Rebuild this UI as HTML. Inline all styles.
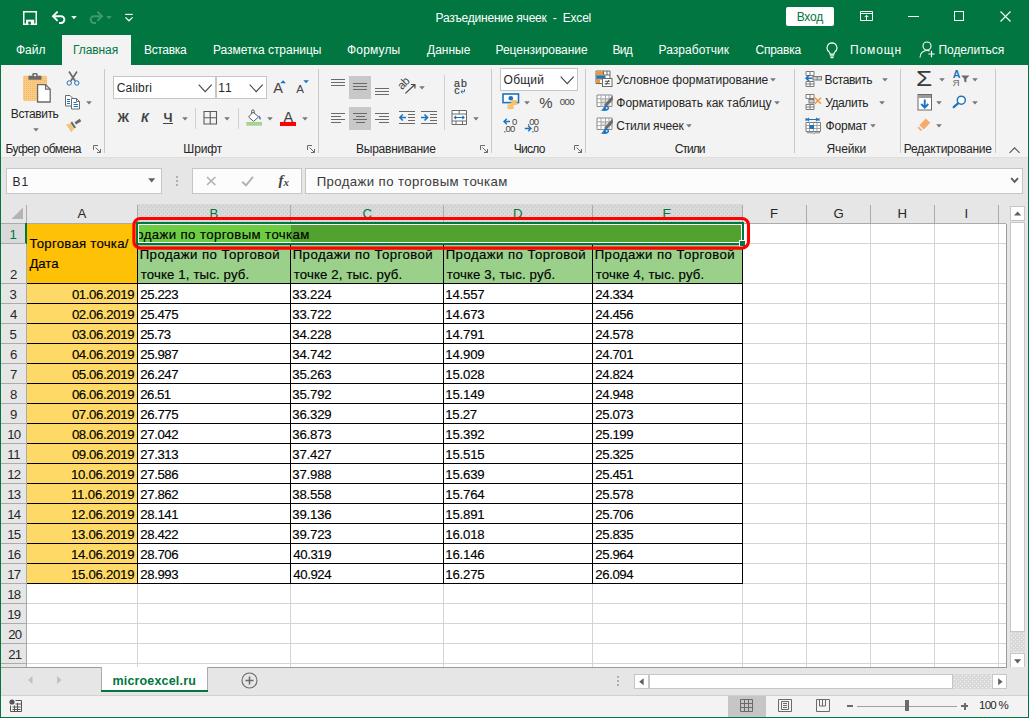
<!DOCTYPE html>
<html lang="ru"><head><meta charset="utf-8"><title>Excel</title>
<style>
html,body{margin:0;padding:0;}
body{width:1029px;height:718px;overflow:hidden;background:#e6e6e6;font-family:"Liberation Sans", sans-serif;}
#w{position:relative;width:1029px;height:718px;overflow:hidden;}
#w div,#w span,#w svg{position:absolute;}
#w span{white-space:pre;}
</style></head><body><div id="w">
<div style="left:0px;top:0px;width:1029px;height:65px;background:#017641;"></div>
<svg style="left:23px;top:10.5px;" width="14" height="15" viewBox="0 0 14 15"><rect x="0.75" y="0.75" width="12.5" height="12.5" fill="none" stroke="#fff" stroke-width="1.5"/><rect x="3" y="8.7" width="8.2" height="4.6" fill="#fff"/><rect x="5.3" y="10.6" width="2.5" height="3" fill="#017641"/></svg>
<svg style="left:51px;top:10px;" width="17" height="15" viewBox="0 0 17 15"><path d="M1.8 6.2 H10 a3.4 3.4 0 0 1 0 6.8 H8" fill="none" stroke="#fff" stroke-width="1.9"/><path d="M6.6 1.6 L2 6.2 L6.6 10.8" fill="none" stroke="#fff" stroke-width="1.9"/></svg>
<svg style="left:70.5px;top:15.8px;" width="7" height="4" viewBox="0 0 7 4"><path d="M0.2 0h5.6l-2.8 3.2z" fill="#fff"/></svg>
<svg style="left:87px;top:10px;" width="17" height="15" viewBox="0 0 17 15"><path d="M15.2 6.2 H7 a3.4 3.4 0 0 0 0 6.8 H9" fill="none" stroke="#3d9a72" stroke-width="1.9"/><path d="M10.4 1.6 L15 6.2 L10.4 10.8" fill="none" stroke="#3d9a72" stroke-width="1.9"/></svg>
<svg style="left:105.5px;top:15.8px;" width="7" height="4" viewBox="0 0 7 4"><path d="M0.2 0h5.6l-2.8 3.2z" fill="#3d9a72"/></svg>
<svg style="left:124px;top:13px;" width="11" height="9" viewBox="0 0 11 9"><path d="M1.2 1.4h7.6" stroke="#fff" stroke-width="1.1"/><path d="M1.4 4.4l3.6 3.4 3.6-3.4" fill="none" stroke="#fff" stroke-width="1.2"/></svg>
<span style="font-size:12px;line-height:20px;top:8px;color:#fff;letter-spacing:-0.222px;left:435.60px;">Разъединение ячеек  -  Excel</span>
<div style="left:786px;top:7px;width:48px;height:19px;background:#fff;border-radius:2px;"></div>
<span style="font-size:12px;line-height:20px;top:7px;color:#017641;letter-spacing:-0.233px;left:796.70px;">Вход</span>
<svg style="left:860px;top:11px;" width="13" height="10" viewBox="0 0 13 10"><path d="M0.5 0.5h12v9h-12z M0.5 2.5h12" fill="none" stroke="#fff" stroke-width="1"/><path d="M6.5 9v-4.5 M4.5 6.2l2-2 2 2" fill="none" stroke="#fff" stroke-width="1"/></svg>
<div style="left:908px;top:16px;width:11px;height:1px;background:#fff;"></div>
<div style="left:954px;top:11px;width:10px;height:10px;border:1px solid #fff;box-sizing:border-box;"></div>
<svg style="left:1000px;top:11px;" width="11" height="11" viewBox="0 0 11 11"><path d="M0.5 0.5l10 10 M10.5 0.5l-10 10" stroke="#fff" stroke-width="1.1"/></svg>
<div style="left:62px;top:35px;width:69px;height:31px;background:#f3f3f3;"></div>
<span style="font-size:12px;line-height:20px;top:40px;color:#fff;left:16.00px;">Файл</span>
<span style="font-size:12px;line-height:20px;top:40px;color:#017641;letter-spacing:-0.083px;left:73.00px;">Главная</span>
<span style="font-size:12px;line-height:20px;top:40px;color:#fff;letter-spacing:-0.333px;left:144.00px;">Вставка</span>
<span style="font-size:12px;line-height:20px;top:40px;color:#fff;letter-spacing:-0.031px;left:213.00px;">Разметка страницы</span>
<span style="font-size:12px;line-height:20px;top:40px;color:#fff;letter-spacing:0.167px;left:347.00px;">Формулы</span>
<span style="font-size:12px;line-height:20px;top:40px;color:#fff;left:427.00px;">Данные</span>
<span style="font-size:12px;line-height:20px;top:40px;color:#fff;letter-spacing:-0.038px;left:495.50px;">Рецензирование</span>
<span style="font-size:12px;line-height:20px;top:40px;color:#fff;letter-spacing:-0.700px;left:612.40px;">Вид</span>
<span style="font-size:12px;line-height:20px;top:40px;color:#fff;letter-spacing:0.050px;left:658.50px;">Разработчик</span>
<span style="font-size:12px;line-height:20px;top:40px;color:#fff;letter-spacing:-0.250px;left:755.50px;">Справка</span>
<span style="font-size:12px;line-height:20px;top:40px;color:#fff;letter-spacing:0.900px;left:850.00px;">Помощн</span>
<span style="font-size:12px;line-height:20px;top:40px;color:#fff;letter-spacing:-0.056px;left:938.50px;">Поделиться</span>
<svg style="left:825.6px;top:41.6px;" width="13" height="17" viewBox="0 0 13 17"><path d="M6 0.9a5 5 0 0 0-2.9 9c.6.6.9 1.3.9 2.2h4c0-.9.3-1.6.9-2.2A5 5 0 0 0 6 0.9z M4 13.8h4 M4.6 15.6h2.8" fill="none" stroke="#fff" stroke-width="1.15"/></svg>
<svg style="left:919px;top:41px;" width="17" height="17" viewBox="0 0 17 17"><circle cx="8" cy="5" r="4" fill="none" stroke="#fff" stroke-width="1.1"/><path d="M1 16.5c0-4.2 3-7 7-7c1 0 1.9.2 2.6.5" fill="none" stroke="#fff" stroke-width="1.1"/><path d="M12.5 9.8v6.4 M9.3 13h6.4" stroke="#fff" stroke-width="1.2"/></svg>
<div style="left:1px;top:65px;width:1027px;height:92px;background:#f3f3f3;"></div>
<div style="left:1px;top:157px;width:1027px;height:1px;background:#dedede;"></div>
<svg style="left:22px;top:72px;" width="30" height="32" viewBox="0 0 30 32"><rect x="1" y="3.7" width="24" height="25" rx="1.5" fill="#f9cb84"/><rect x="1" y="3.7" width="24" height="25" rx="1.5" fill="url(#dpo)"/><path d="M6.4 7.8v-3.2a0.8 0.8 0 0 1 .8-.8h3.1v-1.6a1.3 1.3 0 0 1 1.3-1.3h2.7a1.3 1.3 0 0 1 1.3 1.3v1.6h3.1a0.8 0.8 0 0 1 .8.8v3.2z" fill="#6a6a6a"/><rect x="11.9" y="2.4" width="2.2" height="1.8" fill="#f3f3f3"/><path d="M15.6 12.6h8l4.6 4.6v12.8h-12.6z" fill="#fff" stroke="#6a6a6a" stroke-width="1.3"/><path d="M23.6 12.6v4.6h4.6" fill="none" stroke="#6a6a6a" stroke-width="1.3"/><defs><pattern id="dpo" width="2" height="2" patternUnits="userSpaceOnUse"><rect x="0" y="0" width="1" height="1" fill="#f4b566"/></pattern></defs></svg>
<span style="font-size:12px;line-height:20px;top:104px;color:#262626;letter-spacing:-0.400px;left:10.80px;">Вставить</span>
<svg style="left:33px;top:128px;" width="7" height="4" viewBox="0 0 7 4"><path d="M0.2 0.2h5.6l-2.8 3.3z" fill="#777"/></svg>
<svg style="left:65px;top:71px;" width="16" height="16" viewBox="0 0 16 16"><path d="M4 0.5l6.2 9.5 M12 0.5l-6.2 9.5" stroke="#6a6a6a" stroke-width="1.7" fill="none"/><circle cx="4.2" cy="12" r="2.2" fill="none" stroke="#1e73be" stroke-width="1"/><circle cx="11.8" cy="12" r="2.2" fill="none" stroke="#1e73be" stroke-width="1"/></svg>
<svg style="left:64px;top:95px;" width="17" height="15" viewBox="0 0 17 15"><path d="M1.5 0.5h4.5l2.5 2.5v8h-7z" fill="#fff" stroke="#6a6a6a"/><path d="M3 4.5h3 M3 6.5h3 M3 8.5h3" stroke="#1e73be"/><path d="M7.5 3.5h5l3 3v7.5h-8z" fill="#fff" stroke="#6a6a6a"/><path d="M12.5 3.5v3h3" fill="none" stroke="#6a6a6a"/><path d="M9.5 7.5h3 M9.5 9.5h4.5 M9.5 11.5h4.5" stroke="#1e73be"/></svg>
<svg style="left:86px;top:101px;" width="7" height="4" viewBox="0 0 7 4"><path d="M0.2 0.2h5.6l-2.8 3.3z" fill="#777"/></svg>
<svg style="left:65px;top:117px;" width="18" height="16" viewBox="0 0 18 16"><path d="M9.5 5.2l5.2-3.4 1.6 2.4-5.2 3.4z" fill="#6a6a6a"/><path d="M7.2 4.6l3.8 5.8-1.8 1.2-3.8-5.8z" fill="#6a6a6a"/><path d="M1 7.6l4.2-1.2 3.6 5.4-2.4 3.4c-1-.6-1.4-1.8-2.2-3.2c-.8-1.4-2.2-2.6-3.2-4.4z" fill="#f6c46d"/></svg>
<span style="font-size:12px;line-height:20px;top:139px;color:#262626;letter-spacing:-0.500px;left:5.50px;">Буфер обмена</span>
<svg style="left:93px;top:145px;" width="9" height="9" viewBox="0 0 9 9"><path d="M0.5 5v-4.5h4.5 M2.5 2.5l5 5 M7.5 4v3.5h-3.5" fill="none" stroke="#6a6a6a" stroke-width="1"/></svg>
<div style="left:104px;top:69px;width:1px;height:84px;background:#c9c9c9;"></div>
<div style="left:113px;top:76px;width:103px;height:23px;background:#fff;border:1px solid #c6c6c6;box-sizing:border-box;"></div>
<div style="left:216px;top:76px;width:51px;height:23px;background:#fff;border:1px solid #c6c6c6;box-sizing:border-box;"></div>
<span style="font-size:12px;line-height:20px;top:78px;color:#262626;letter-spacing:0.183px;left:116.70px;">Calibri</span>
<svg style="left:198px;top:84px;" width="15" height="9" viewBox="0 0 15 9"><path d="M0.7 0.7l6.5 7 6.5-7" fill="none" stroke="#444" stroke-width="1.1"/></svg>
<span style="font-size:12px;line-height:20px;top:78px;color:#262626;letter-spacing:1.000px;left:218.30px;">11</span>
<svg style="left:249px;top:84px;" width="15" height="9" viewBox="0 0 15 9"><path d="M0.7 0.7l6.5 7 6.5-7" fill="none" stroke="#444" stroke-width="1.1"/></svg>
<span style="font-size:14.5px;line-height:20px;top:78px;color:#444;left:273.30px;">A</span>
<svg style="left:280px;top:80px;" width="7" height="4" viewBox="0 0 7 4"><path d="M0.3 3.3l2.8-3 2.8 3z" fill="#1e73be"/></svg>
<span style="font-size:11.6px;line-height:20px;top:79px;color:#444;left:296.20px;">A</span>
<svg style="left:303px;top:80px;" width="7" height="4" viewBox="0 0 7 4"><path d="M0.3 0.2h5.6l-2.8 3z" fill="#1e73be"/></svg>
<span style="font-size:12.8px;line-height:20px;top:108px;color:#444;font-weight:700;left:117.50px;">Ж</span>
<span style="font-size:12.8px;line-height:20px;top:108px;color:#444;font-weight:700;font-style:italic;left:141.00px;">К</span>
<span style="font-size:12.8px;line-height:20px;top:108px;color:#444;font-weight:700;left:163.40px;">Ч</span>
<div style="left:163px;top:123px;width:10px;height:1px;background:#444;"></div>
<svg style="left:182px;top:117px;" width="7" height="4" viewBox="0 0 7 4"><path d="M0.2 0.2h5.6l-2.8 3.3z" fill="#777"/></svg>
<div style="left:195px;top:108px;width:1px;height:21px;background:#d0d0d0;"></div>
<svg style="left:203px;top:111px;" width="15" height="14" viewBox="0 0 15 14"><path d="M1 0.5h12.5v12.5h-12.5z M1 6.75h12.5 M7.25 0.5v12.5" fill="none" stroke="#5a5a5a" stroke-width="1.1"/></svg>
<svg style="left:224px;top:117px;" width="7" height="4" viewBox="0 0 7 4"><path d="M0.2 0.2h5.6l-2.8 3.3z" fill="#777"/></svg>
<div style="left:238px;top:108px;width:1px;height:21px;background:#d0d0d0;"></div>
<svg style="left:246px;top:109px;" width="18" height="17" viewBox="0 0 18 17"><rect x="0.3" y="13" width="15.7" height="3.7" fill="#a5d48f"/><path d="M7 3.2l5.6 4.6-5 4.6-5-4.4z" fill="#fff" stroke="#5a5a5a" stroke-width="1"/><path d="M5.6 4.6v-2.4a1.3 1.3 0 0 1 2.6 0v2" fill="none" stroke="#5a5a5a" stroke-width="1"/><path d="M12.8 6.2c1.6 1.6 2.3 3 1.9 4.6c-.9-.2-1.6-.9-1.7-2.3z" fill="#1e73be"/></svg>
<svg style="left:267px;top:117px;" width="7" height="4" viewBox="0 0 7 4"><path d="M0.2 0.2h5.6l-2.8 3.3z" fill="#777"/></svg>
<span style="font-size:14.5px;line-height:20px;top:107px;color:#444;left:283.50px;">A</span>
<div style="left:280px;top:122px;width:16px;height:4px;background:#f00;"></div>
<svg style="left:302px;top:117px;" width="7" height="4" viewBox="0 0 7 4"><path d="M0.2 0.2h5.6l-2.8 3.3z" fill="#777"/></svg>
<span style="font-size:12px;line-height:20px;top:139px;color:#262626;letter-spacing:-0.150px;left:183.30px;">Шрифт</span>
<svg style="left:307px;top:145px;" width="9" height="9" viewBox="0 0 9 9"><path d="M0.5 5v-4.5h4.5 M2.5 2.5l5 5 M7.5 4v3.5h-3.5" fill="none" stroke="#6a6a6a" stroke-width="1"/></svg>
<div style="left:318px;top:69px;width:1px;height:84px;background:#c9c9c9;"></div>
<div style="left:349px;top:76px;width:22px;height:23px;background:#c8c8c8;"></div>
<div style="left:349px;top:107px;width:22px;height:23px;background:#c8c8c8;"></div>
<div style="left:331px;top:79px;width:14px;height:1px;background:#6a6a6a;"></div>
<div style="left:331px;top:82px;width:14px;height:1px;background:#6a6a6a;"></div>
<div style="left:331px;top:85px;width:14px;height:1px;background:#6a6a6a;"></div>
<div style="left:353px;top:83px;width:14px;height:1px;background:#6a6a6a;"></div>
<div style="left:353px;top:86px;width:14px;height:1px;background:#6a6a6a;"></div>
<div style="left:353px;top:89px;width:14px;height:1px;background:#6a6a6a;"></div>
<div style="left:375px;top:88px;width:14px;height:1px;background:#6a6a6a;"></div>
<div style="left:375px;top:91px;width:14px;height:1px;background:#6a6a6a;"></div>
<div style="left:375px;top:94px;width:14px;height:1px;background:#6a6a6a;"></div>
<div style="left:331px;top:113px;width:14px;height:1px;background:#6a6a6a;"></div>
<div style="left:331px;top:116px;width:10px;height:1px;background:#6a6a6a;"></div>
<div style="left:331px;top:119px;width:14px;height:1px;background:#6a6a6a;"></div>
<div style="left:331px;top:122px;width:10px;height:1px;background:#6a6a6a;"></div>
<div style="left:353px;top:113px;width:14px;height:1px;background:#6a6a6a;"></div>
<div style="left:355.5px;top:116px;width:9.5px;height:1px;background:#6a6a6a;"></div>
<div style="left:353px;top:119px;width:14px;height:1px;background:#6a6a6a;"></div>
<div style="left:355.5px;top:122px;width:9.5px;height:1px;background:#6a6a6a;"></div>
<div style="left:375px;top:113px;width:14px;height:1px;background:#6a6a6a;"></div>
<div style="left:379px;top:116px;width:10px;height:1px;background:#6a6a6a;"></div>
<div style="left:375px;top:119px;width:14px;height:1px;background:#6a6a6a;"></div>
<div style="left:379px;top:122px;width:10px;height:1px;background:#6a6a6a;"></div>
<svg style="left:397px;top:77px;" width="21" height="19" viewBox="0 0 21 19"><text x="0" y="0" transform="translate(4.9 13.2) rotate(-45)" font-family="Liberation Sans, sans-serif" font-size="11.5" letter-spacing="-0.6" fill="#444">ab</text><path d="M8.4 16.4l9.2-8.6 M13.9 7.5h4v4" fill="none" stroke="#444" stroke-width="1.2"/></svg>
<svg style="left:419px;top:86px;" width="7" height="4" viewBox="0 0 7 4"><path d="M0.2 0.2h5.6l-2.8 3.3z" fill="#777"/></svg>
<div style="left:399px;top:111px;width:16px;height:1px;background:#6a6a6a;"></div>
<div style="left:399px;top:123px;width:16px;height:1px;background:#6a6a6a;"></div>
<div style="left:407.5px;top:114px;width:7.5px;height:1px;background:#6a6a6a;"></div>
<div style="left:407.5px;top:117px;width:7.5px;height:1px;background:#6a6a6a;"></div>
<div style="left:407.5px;top:120px;width:7.5px;height:1px;background:#6a6a6a;"></div>
<svg style="left:399px;top:113px;" width="8" height="9" viewBox="0 0 8 9"><path d="M7 4.5h-6 M3.8 1.5l-3 3 3 3" fill="none" stroke="#1e73be" stroke-width="1.6"/></svg>
<div style="left:421px;top:111px;width:16px;height:1px;background:#6a6a6a;"></div>
<div style="left:421px;top:123px;width:16px;height:1px;background:#6a6a6a;"></div>
<div style="left:429.5px;top:114px;width:7.5px;height:1px;background:#6a6a6a;"></div>
<div style="left:429.5px;top:117px;width:7.5px;height:1px;background:#6a6a6a;"></div>
<div style="left:429.5px;top:120px;width:7.5px;height:1px;background:#6a6a6a;"></div>
<svg style="left:421px;top:113px;" width="8" height="9" viewBox="0 0 8 9"><path d="M0 4.5h6 M3.5 1.5l3 3-3 3" fill="none" stroke="#1e73be" stroke-width="1.6"/></svg>
<div style="left:444px;top:75px;width:1px;height:55px;background:#d0d0d0;"></div>
<span style="font-size:10.5px;line-height:20px;top:73px;color:#3b3b3b;letter-spacing:1.200px;left:454.00px;-webkit-text-stroke:0.2px #3b3b3b;">ab</span>
<span style="font-size:10.5px;line-height:20px;top:80px;color:#3b3b3b;left:454.30px;-webkit-text-stroke:0.2px #3b3b3b;">c</span>
<svg style="left:460px;top:89px;" width="6" height="5" viewBox="0 0 6 5"><path d="M4.5 0.3v2.4h-3.4 M2.6 1.1l-1.7 1.6 1.7 1.6" fill="none" stroke="#1e73be" stroke-width="1"/></svg>
<svg style="left:451px;top:110px;" width="17" height="16" viewBox="0 0 17 16"><path d="M1 0.5h14.5v14h-14.5z M1 4h14.5 M1 11h14.5 M8.2 0.5v3.5 M5 11v3.5 M11.5 11v3.5" fill="#fff" stroke="#6a6a6a" stroke-width="1"/><path d="M3.5 7.5h9.5 M5.2 5.8l-1.8 1.7 1.8 1.7 M11.3 5.8l1.8 1.7-1.8 1.7" fill="none" stroke="#1e73be" stroke-width="1.1"/></svg>
<svg style="left:473px;top:117px;" width="7" height="4" viewBox="0 0 7 4"><path d="M0.2 0.2h5.6l-2.8 3.3z" fill="#777"/></svg>
<span style="font-size:12px;line-height:20px;top:139px;color:#262626;letter-spacing:-0.236px;left:356.00px;">Выравнивание</span>
<svg style="left:480px;top:145px;" width="9" height="9" viewBox="0 0 9 9"><path d="M0.5 5v-4.5h4.5 M2.5 2.5l5 5 M7.5 4v3.5h-3.5" fill="none" stroke="#6a6a6a" stroke-width="1"/></svg>
<div style="left:491px;top:69px;width:1px;height:84px;background:#c9c9c9;"></div>
<div style="left:500px;top:68px;width:78px;height:23px;background:#fff;border:1px solid #c6c6c6;box-sizing:border-box;"></div>
<span style="font-size:12px;line-height:20px;top:70px;color:#262626;letter-spacing:0.200px;left:503.60px;">Общий</span>
<svg style="left:560px;top:76px;" width="15" height="9" viewBox="0 0 15 9"><path d="M0.7 0.7l6.5 7 6.5-7" fill="none" stroke="#444" stroke-width="1.1"/></svg>
<svg style="left:502px;top:93px;" width="18" height="17" viewBox="0 0 18 17"><rect x="1" y="1" width="15.5" height="8.6" fill="#fff" stroke="#1e73be" stroke-width="1.6"/><circle cx="8.8" cy="5.3" r="2.3" fill="#1e73be"/><ellipse cx="12" cy="8.3" rx="3.6" ry="1.5" fill="#f6c46d"/><ellipse cx="12" cy="10.6" rx="3.6" ry="1.5" fill="#f6c46d"/><ellipse cx="8.5" cy="12.6" rx="3.6" ry="1.4" fill="#f6c46d"/><ellipse cx="8.5" cy="14.8" rx="3.6" ry="1.4" fill="#f6c46d"/></svg>
<svg style="left:524px;top:101px;" width="7" height="4" viewBox="0 0 7 4"><path d="M0.2 0.2h5.6l-2.8 3.3z" fill="#777"/></svg>
<span style="font-size:15px;line-height:20px;top:93px;color:#444;left:539.30px;">%</span>
<span style="font-size:9.6px;line-height:20px;top:92px;color:#444;letter-spacing:-0.550px;left:559.70px;">000</span>
<svg style="left:503px;top:117px;" width="17" height="16" viewBox="0 0 17 16"><path d="M7 4.5h-6 M3.8 1.8l-2.8 2.7 2.8 2.7" fill="none" stroke="#1e73be" stroke-width="1.4"/><text x="9" y="7.6" font-family="Liberation Sans, sans-serif" font-size="9.5" fill="#444">0</text><text x="0.5" y="14.6" font-family="Liberation Sans, sans-serif" font-size="9.5" letter-spacing="-0.7" fill="#444">,00</text></svg>
<svg style="left:524px;top:117px;" width="18" height="16" viewBox="0 0 18 16"><text x="3.2" y="7.6" font-family="Liberation Sans, sans-serif" font-size="9.5" letter-spacing="-0.7" fill="#444">,00</text><path d="M0.8 11.5h6 M4.2 8.8l2.8 2.7-2.8 2.7" fill="none" stroke="#1e73be" stroke-width="1.4"/><text x="7.6" y="14.6" font-family="Liberation Sans, sans-serif" font-size="9.5" letter-spacing="-0.7" fill="#444">,0</text></svg>
<span style="font-size:12px;line-height:20px;top:139px;color:#262626;letter-spacing:-0.675px;left:513.70px;">Число</span>
<svg style="left:574px;top:145px;" width="9" height="9" viewBox="0 0 9 9"><path d="M0.5 5v-4.5h4.5 M2.5 2.5l5 5 M7.5 4v3.5h-3.5" fill="none" stroke="#6a6a6a" stroke-width="1"/></svg>
<div style="left:585px;top:69px;width:1px;height:84px;background:#c9c9c9;"></div>
<svg style="left:595.4px;top:70.1px;" width="18" height="18" viewBox="0 0 18 18"><path d="M1 1h14v12.5h-14z" fill="#fff" stroke="#6a6a6a"/><path d="M1 5h14 M1 9h14 M8.5 1v4 M12 1v4" stroke="#6a6a6a" fill="none"/><rect x="1.5" y="1.5" width="6.5" height="3.2" fill="#f7941d"/><rect x="1.5" y="5.5" width="9" height="3.2" fill="#1e73be"/><rect x="1.5" y="9.5" width="3.6" height="3.5" fill="#f7941d"/><rect x="7.5" y="8.5" width="9.5" height="8" fill="#fff" stroke="#6a6a6a"/><path d="M9.8 11.3h5 M9.8 13.7h5 M13.8 10l-3 5" stroke="#444" stroke-width="0.9" fill="none"/></svg>
<svg style="left:596px;top:93.6px;" width="18" height="17" viewBox="0 0 18 17"><path d="M1 1h15v11.5h-15z" fill="#fff" stroke="#8a8a8a"/><rect x="5" y="4.8" width="8" height="7.6" fill="#dcdcdc"/><path d="M1 4.8h15 M1 8.6h15 M5 1v11.5 M9.5 1v11.5 M13 1v11.5" stroke="#a0a0a0" fill="none" stroke-width="0.9"/><path d="M16.6 1.6l0.3 4.2-6.8 7.2-2-1.9z" fill="#6a6a6a"/><path d="M4.3 16.6c1.7-.6 2.6-1.9 3.3-3.2c.8-1.4 2.2-2.2 3.7-1.7c1.5.5 2.2 2.1 1.5 3.4c-.7 1.4-2.3 1.9-4.1 1.9c-1.6 0-3 0-4.4-.4z" fill="#1e73be"/><circle cx="10.6" cy="13.9" r="1" fill="#cfe8fa"/></svg>
<svg style="left:596px;top:116.6px;" width="18" height="17" viewBox="0 0 18 17"><path d="M1 1h15v11.5h-15z" fill="#fff" stroke="#8a8a8a"/><rect x="5" y="4.8" width="8" height="4" fill="#d8dee0"/><path d="M1 4.8h15 M1 8.6h15 M5 1v11.5 M9.5 1v11.5 M13 1v11.5" stroke="#a0a0a0" fill="none" stroke-width="0.9"/><path d="M16.6 1.6l0.3 4.2-6.8 7.2-2-1.9z" fill="#6a6a6a"/><path d="M4.3 16.6c1.7-.6 2.6-1.9 3.3-3.2c.8-1.4 2.2-2.2 3.7-1.7c1.5.5 2.2 2.1 1.5 3.4c-.7 1.4-2.3 1.9-4.1 1.9c-1.6 0-3 0-4.4-.4z" fill="#1e73be"/><circle cx="10.6" cy="13.9" r="1" fill="#cfe8fa"/></svg>
<span style="font-size:12px;line-height:20px;top:70px;color:#262626;letter-spacing:-0.032px;left:616.30px;">Условное форматирование</span>
<svg style="left:770px;top:78px;" width="7" height="4" viewBox="0 0 7 4"><path d="M0.2 0.2h5.6l-2.8 3.3z" fill="#777"/></svg>
<span style="font-size:12px;line-height:20px;top:93px;color:#262626;letter-spacing:-0.037px;left:616.30px;">Форматировать как таблицу</span>
<svg style="left:774px;top:101px;" width="7" height="4" viewBox="0 0 7 4"><path d="M0.2 0.2h5.6l-2.8 3.3z" fill="#777"/></svg>
<span style="font-size:12px;line-height:20px;top:116px;color:#262626;letter-spacing:-0.180px;left:616.30px;">Стили ячеек</span>
<svg style="left:686px;top:124px;" width="7" height="4" viewBox="0 0 7 4"><path d="M0.2 0.2h5.6l-2.8 3.3z" fill="#777"/></svg>
<span style="font-size:12px;line-height:20px;top:139px;color:#262626;letter-spacing:-0.925px;left:674.70px;">Стили</span>
<div style="left:794px;top:69px;width:1px;height:84px;background:#c9c9c9;"></div>
<svg style="left:805px;top:71px;" width="18" height="17" viewBox="0 0 18 17"><path d="M1 0.5h8v4h-8z M5 0.5v4 M1 10.5h8v5h-8z M1 13h8 M5 10.5v5" fill="#fff" stroke="#7a7a7a"/><rect x="8" y="5.5" width="8.5" height="3.5" fill="#d0d0d0" stroke="#7a7a7a"/><path d="M12.2 5.5v3.5" stroke="#7a7a7a"/><path d="M7.5 7.2h-6 M4 4.4l-2.9 2.8 2.9 2.8" fill="none" stroke="#1e73be" stroke-width="1.6"/></svg>
<svg style="left:805px;top:94px;" width="18" height="17" viewBox="0 0 18 17"><path d="M1 0.5h8v4h-8z M5 0.5v4 M1 10.5h8v5h-8z M1 13h8 M5 10.5v5" fill="#fff" stroke="#7a7a7a"/><rect x="4" y="5.5" width="5" height="3.5" fill="#d0d0d0" stroke="#7a7a7a"/><path d="M9.8 3.8l6.2 6 M16 3.8l-6.2 6" fill="none" stroke="#f4923a" stroke-width="1.4"/></svg>
<svg style="left:805px;top:117px;" width="18" height="17" viewBox="0 0 18 17"><path d="M1 1v3 M14 1v3 M2 2.5h11 M4 0.8l-2 1.7 2 1.7 M11 0.8l2 1.7-2 1.7" fill="none" stroke="#1e73be" stroke-width="1.1"/><path d="M1 5.5h14.5v9h-14.5z" fill="#fff" stroke="#7a7a7a"/><path d="M1 8.5h14.5 M1 11.5h14.5 M4.5 5.5v9 M8.5 5.5v9 M12 5.5v9" stroke="#9a9a9a" fill="none" stroke-width="0.9"/><rect x="4.5" y="8" width="4.5" height="4" fill="#1e73be"/><path d="M2 15.8h6l1 .7 1-.7h5" fill="none" stroke="#7a7a7a" stroke-width="0.9"/></svg>
<span style="font-size:12px;line-height:20px;top:70px;color:#262626;letter-spacing:-0.429px;left:824.60px;">Вставить</span>
<svg style="left:882px;top:78px;" width="7" height="4" viewBox="0 0 7 4"><path d="M0.2 0.2h5.6l-2.8 3.3z" fill="#777"/></svg>
<span style="font-size:12px;line-height:20px;top:93px;color:#262626;letter-spacing:-0.433px;left:825.30px;">Удалить</span>
<svg style="left:879px;top:101px;" width="7" height="4" viewBox="0 0 7 4"><path d="M0.2 0.2h5.6l-2.8 3.3z" fill="#777"/></svg>
<span style="font-size:12px;line-height:20px;top:116px;color:#262626;letter-spacing:-0.180px;left:825.60px;">Формат</span>
<svg style="left:870px;top:124px;" width="7" height="4" viewBox="0 0 7 4"><path d="M0.2 0.2h5.6l-2.8 3.3z" fill="#777"/></svg>
<span style="font-size:12px;line-height:20px;top:139px;color:#262626;letter-spacing:-0.080px;left:826.40px;">Ячейки</span>
<div style="left:900px;top:69px;width:1px;height:84px;background:#c9c9c9;"></div>
<span style="font-size:21.5px;line-height:20px;top:69px;color:#3b3b3b;left:915.80px;transform:scaleX(1.22);transform-origin:0 0;">Σ</span>
<svg style="left:939px;top:78px;" width="7" height="4" viewBox="0 0 7 4"><path d="M0.2 0.2h5.6l-2.8 3.3z" fill="#777"/></svg>
<span style="font-size:10.6px;line-height:20px;top:64px;color:#1e73be;font-weight:700;left:952.80px;">A</span>
<span style="font-size:9.8px;line-height:20px;top:73px;color:#6a6a6a;left:952.40px;">Я</span>
<svg style="left:960.5px;top:75.3px;" width="9" height="8" viewBox="0 0 9 8"><path d="M0.2 0.4h8.2l-3 3.3v3.8l-2.2-1.1v-2.7z" fill="#6a6a6a"/></svg>
<svg style="left:972px;top:78px;" width="7" height="4" viewBox="0 0 7 4"><path d="M0.2 0.2h5.6l-2.8 3.3z" fill="#777"/></svg>
<svg style="left:917px;top:94px;" width="16" height="17" viewBox="0 0 16 17"><rect x="1" y="0.5" width="13.5" height="15.5" fill="#fff" stroke="#6a6a6a"/><rect x="1.5" y="1" width="12.5" height="3" fill="#9a9a9a"/><path d="M7.75 5.5v8 M4.2 10l3.55 3.6 3.55-3.6" fill="none" stroke="#1e73be" stroke-width="1.9"/></svg>
<svg style="left:936px;top:101px;" width="7" height="4" viewBox="0 0 7 4"><path d="M0.2 0.2h5.6l-2.8 3.3z" fill="#777"/></svg>
<svg style="left:952px;top:95px;" width="16" height="14" viewBox="0 0 16 14"><circle cx="9.3" cy="5.2" r="4" fill="#fff" stroke="#1e73be" stroke-width="1.5"/><path d="M6.3 8.2l-4.6 4" stroke="#1e73be" stroke-width="2.2" stroke-linecap="round"/></svg>
<svg style="left:972px;top:101px;" width="7" height="4" viewBox="0 0 7 4"><path d="M0.2 0.2h5.6l-2.8 3.3z" fill="#777"/></svg>
<svg style="left:917px;top:117px;" width="15" height="15" viewBox="0 0 15 15"><path d="M8.8 1.6l4.4 4.2-6.4 6.6-4.4-4.2z" fill="#f6ab6c"/><path d="M1.6 9.6l3.6 3.4-1.2 1.2-3.4-3.4z" fill="#f6ab6c"/></svg>
<svg style="left:936px;top:124px;" width="7" height="4" viewBox="0 0 7 4"><path d="M0.2 0.2h5.6l-2.8 3.3z" fill="#777"/></svg>
<span style="font-size:12px;line-height:20px;top:139px;color:#262626;letter-spacing:-0.246px;left:903.70px;">Редактирование</span>
<div style="left:995px;top:69px;width:1px;height:84px;background:#c9c9c9;"></div>
<svg style="left:1008px;top:147px;" width="13" height="7" viewBox="0 0 13 7"><path d="M1.6 5.9l5-5 5 5" fill="none" stroke="#555" stroke-width="1.1"/></svg>
<div style="left:6px;top:168px;width:156px;height:26px;background:#fcfcfc;border:1px solid #c6c6c6;box-sizing:border-box;"></div>
<span style="font-size:12px;line-height:20px;top:172px;color:#262626;letter-spacing:1.200px;left:12.40px;">B1</span>
<svg style="left:148px;top:178px;" width="8" height="5" viewBox="0 0 8 5"><path d="M0.2 0.2h7l-3.5 4.2z" fill="#606060"/></svg>
<div style="left:176px;top:176px;width:2px;height:2px;background:#b0b0b0;"></div>
<div style="left:176px;top:180px;width:2px;height:2px;background:#b0b0b0;"></div>
<div style="left:176px;top:184px;width:2px;height:2px;background:#b0b0b0;"></div>
<div style="left:192px;top:168px;width:110px;height:26px;background:#fcfcfc;border:1px solid #c6c6c6;box-sizing:border-box;"></div>
<svg style="left:206px;top:176px;" width="11" height="10" viewBox="0 0 11 10"><path d="M1 1l8.4 8 M9.4 1l-8.4 8" stroke="#b2b2b2" stroke-width="1.7"/></svg>
<svg style="left:241px;top:175px;" width="14" height="12" viewBox="0 0 14 12"><path d="M1.2 6.8l3.8 3.6 7-8.6" fill="none" stroke="#b2b2b2" stroke-width="2"/></svg>
<span style="font-size:15px;line-height:20px;top:170px;color:#444;font-weight:700;font-style:italic;left:278.40px;font-family:'Liberation Serif',serif;">f</span>
<span style="font-size:11px;line-height:20px;top:172px;color:#444;font-weight:700;font-style:italic;left:283.60px;font-family:'Liberation Serif',serif;">x</span>
<div style="left:305px;top:168px;width:718px;height:26px;background:#fcfcfc;border:1px solid #c6c6c6;box-sizing:border-box;"></div>
<span style="font-size:13.2px;line-height:20px;top:172px;color:#3a3a3a;letter-spacing:0.396px;left:316.70px;">Продажи по торговым точкам</span>
<svg style="left:1010px;top:177px;" width="10" height="7" viewBox="0 0 10 7"><path d="M1.2 1.2l3.4 3.6 3.4-3.6" fill="none" stroke="#5a5a5a" stroke-width="1.9"/></svg>
<div style="left:27px;top:224px;width:979px;height:443px;background:#fff;"></div>
<div style="left:1px;top:204px;width:1027px;height:20px;background:#e6e6e6;"></div>
<div style="left:138px;top:204px;width:605px;height:19px;background:#d9d9d9;"></div>
<svg style="left:138px;top:204px" width="605" height="19"><defs><pattern id="dp" width="4" height="4" patternUnits="userSpaceOnUse"><rect x="1" y="1" width="1" height="1" fill="#c6c6c6"/><rect x="3" y="3" width="1" height="1" fill="#c6c6c6"/></pattern></defs><rect width="605" height="19" fill="url(#dp)"/></svg>
<div style="left:1px;top:223px;width:1006px;height:1px;background:#ababab;"></div>
<div style="left:26px;top:205px;width:1px;height:19px;background:#ababab;"></div>
<div style="left:137px;top:205px;width:1px;height:19px;background:#ababab;"></div>
<span style="font-size:13.2px;line-height:20px;top:204px;color:#262626;left:77.50px;">A</span>
<div style="left:290px;top:205px;width:1px;height:19px;background:#ababab;"></div>
<span style="font-size:13.2px;line-height:20px;top:204px;color:#017641;left:209.50px;">B</span>
<div style="left:443px;top:205px;width:1px;height:19px;background:#ababab;"></div>
<span style="font-size:13.2px;line-height:20px;top:204px;color:#017641;left:362.50px;">C</span>
<div style="left:592px;top:205px;width:1px;height:19px;background:#ababab;"></div>
<span style="font-size:13.2px;line-height:20px;top:204px;color:#017641;left:513.00px;">D</span>
<div style="left:742px;top:205px;width:1px;height:19px;background:#ababab;"></div>
<span style="font-size:13.2px;line-height:20px;top:204px;color:#017641;left:662.50px;">E</span>
<div style="left:806px;top:205px;width:1px;height:19px;background:#ababab;"></div>
<span style="font-size:13.2px;line-height:20px;top:204px;color:#262626;left:770.00px;">F</span>
<div style="left:870px;top:205px;width:1px;height:19px;background:#ababab;"></div>
<span style="font-size:13.2px;line-height:20px;top:204px;color:#262626;left:833.50px;">G</span>
<div style="left:934px;top:205px;width:1px;height:19px;background:#ababab;"></div>
<span style="font-size:13.2px;line-height:20px;top:204px;color:#262626;left:897.50px;">H</span>
<div style="left:998px;top:205px;width:1px;height:19px;background:#ababab;"></div>
<span style="font-size:13.2px;line-height:20px;top:204px;color:#262626;left:964.50px;">I</span>
<div style="left:138px;top:222px;width:605px;height:2px;background:#017641;"></div>
<svg style="left:11px;top:207px;" width="13" height="13" viewBox="0 0 13 13"><path d="M12 0.5V12H0.5z" fill="#b4b4b4"/></svg>
<div style="left:1px;top:224px;width:25px;height:443px;background:#e6e6e6;"></div>
<div style="left:26px;top:224px;width:1px;height:443px;background:#ababab;"></div>
<div style="left:1px;top:224px;width:24px;height:19px;background:#d9d9d9;"></div>
<div style="left:25px;top:223px;width:2px;height:21px;background:#017641;"></div>
<div style="left:1px;top:243px;width:25px;height:1px;background:#ababab;"></div>
<span style="font-size:13.2px;line-height:20px;top:225px;color:#017641;left:9.60px;">1</span>
<div style="left:1px;top:283px;width:25px;height:1px;background:#ababab;"></div>
<span style="font-size:13.2px;line-height:20px;top:265px;color:#262626;left:10.10px;">2</span>
<div style="left:1px;top:303px;width:25px;height:1px;background:#ababab;"></div>
<span style="font-size:13.2px;line-height:20px;top:285px;color:#262626;left:9.60px;">3</span>
<div style="left:1px;top:323px;width:25px;height:1px;background:#ababab;"></div>
<span style="font-size:13.2px;line-height:20px;top:305px;color:#262626;left:10.10px;">4</span>
<div style="left:1px;top:343px;width:25px;height:1px;background:#ababab;"></div>
<span style="font-size:13.2px;line-height:20px;top:325px;color:#262626;left:9.60px;">5</span>
<div style="left:1px;top:363px;width:25px;height:1px;background:#ababab;"></div>
<span style="font-size:13.2px;line-height:20px;top:345px;color:#262626;left:10.10px;">6</span>
<div style="left:1px;top:383px;width:25px;height:1px;background:#ababab;"></div>
<span style="font-size:13.2px;line-height:20px;top:365px;color:#262626;left:10.10px;">7</span>
<div style="left:1px;top:403px;width:25px;height:1px;background:#ababab;"></div>
<span style="font-size:13.2px;line-height:20px;top:385px;color:#262626;left:10.10px;">8</span>
<div style="left:1px;top:423px;width:25px;height:1px;background:#ababab;"></div>
<span style="font-size:13.2px;line-height:20px;top:405px;color:#262626;left:10.10px;">9</span>
<div style="left:1px;top:443px;width:25px;height:1px;background:#ababab;"></div>
<span style="font-size:13.2px;line-height:20px;top:425px;color:#262626;letter-spacing:-1.000px;left:7.30px;">10</span>
<div style="left:1px;top:463px;width:25px;height:1px;background:#ababab;"></div>
<span style="font-size:13.2px;line-height:20px;top:445px;color:#262626;letter-spacing:-0.400px;left:7.30px;">11</span>
<div style="left:1px;top:483px;width:25px;height:1px;background:#ababab;"></div>
<span style="font-size:13.2px;line-height:20px;top:465px;color:#262626;letter-spacing:-1.000px;left:7.30px;">12</span>
<div style="left:1px;top:503px;width:25px;height:1px;background:#ababab;"></div>
<span style="font-size:13.2px;line-height:20px;top:485px;color:#262626;letter-spacing:-1.000px;left:7.30px;">13</span>
<div style="left:1px;top:523px;width:25px;height:1px;background:#ababab;"></div>
<span style="font-size:13.2px;line-height:20px;top:505px;color:#262626;letter-spacing:-1.000px;left:7.30px;">14</span>
<div style="left:1px;top:543px;width:25px;height:1px;background:#ababab;"></div>
<span style="font-size:13.2px;line-height:20px;top:525px;color:#262626;letter-spacing:-1.000px;left:7.30px;">15</span>
<div style="left:1px;top:563px;width:25px;height:1px;background:#ababab;"></div>
<span style="font-size:13.2px;line-height:20px;top:545px;color:#262626;letter-spacing:-1.000px;left:7.30px;">16</span>
<div style="left:1px;top:583px;width:25px;height:1px;background:#ababab;"></div>
<span style="font-size:13.2px;line-height:20px;top:565px;color:#262626;letter-spacing:-1.000px;left:7.30px;">17</span>
<div style="left:1px;top:603px;width:25px;height:1px;background:#ababab;"></div>
<span style="font-size:13.2px;line-height:20px;top:585px;color:#262626;letter-spacing:-1.000px;left:7.30px;">18</span>
<div style="left:1px;top:623px;width:25px;height:1px;background:#ababab;"></div>
<span style="font-size:13.2px;line-height:20px;top:605px;color:#262626;letter-spacing:-1.000px;left:7.30px;">19</span>
<div style="left:1px;top:643px;width:25px;height:1px;background:#ababab;"></div>
<span style="font-size:13.2px;line-height:20px;top:625px;color:#262626;letter-spacing:-1.000px;left:8.30px;">20</span>
<div style="left:1px;top:663px;width:25px;height:1px;background:#ababab;"></div>
<span style="font-size:13.2px;line-height:20px;top:645px;color:#262626;letter-spacing:-1.000px;left:8.30px;">21</span>
<div style="left:137px;top:224px;width:1px;height:443px;background:#d4d4d4;"></div>
<div style="left:290px;top:224px;width:1px;height:443px;background:#d4d4d4;"></div>
<div style="left:443px;top:224px;width:1px;height:443px;background:#d4d4d4;"></div>
<div style="left:592px;top:224px;width:1px;height:443px;background:#d4d4d4;"></div>
<div style="left:742px;top:224px;width:1px;height:443px;background:#d4d4d4;"></div>
<div style="left:806px;top:224px;width:1px;height:443px;background:#d4d4d4;"></div>
<div style="left:870px;top:224px;width:1px;height:443px;background:#d4d4d4;"></div>
<div style="left:934px;top:224px;width:1px;height:443px;background:#d4d4d4;"></div>
<div style="left:998px;top:224px;width:1px;height:443px;background:#d4d4d4;"></div>
<div style="left:27px;top:243px;width:979px;height:1px;background:#d4d4d4;"></div>
<div style="left:27px;top:283px;width:979px;height:1px;background:#d4d4d4;"></div>
<div style="left:27px;top:303px;width:979px;height:1px;background:#d4d4d4;"></div>
<div style="left:27px;top:323px;width:979px;height:1px;background:#d4d4d4;"></div>
<div style="left:27px;top:343px;width:979px;height:1px;background:#d4d4d4;"></div>
<div style="left:27px;top:363px;width:979px;height:1px;background:#d4d4d4;"></div>
<div style="left:27px;top:383px;width:979px;height:1px;background:#d4d4d4;"></div>
<div style="left:27px;top:403px;width:979px;height:1px;background:#d4d4d4;"></div>
<div style="left:27px;top:423px;width:979px;height:1px;background:#d4d4d4;"></div>
<div style="left:27px;top:443px;width:979px;height:1px;background:#d4d4d4;"></div>
<div style="left:27px;top:463px;width:979px;height:1px;background:#d4d4d4;"></div>
<div style="left:27px;top:483px;width:979px;height:1px;background:#d4d4d4;"></div>
<div style="left:27px;top:503px;width:979px;height:1px;background:#d4d4d4;"></div>
<div style="left:27px;top:523px;width:979px;height:1px;background:#d4d4d4;"></div>
<div style="left:27px;top:543px;width:979px;height:1px;background:#d4d4d4;"></div>
<div style="left:27px;top:563px;width:979px;height:1px;background:#d4d4d4;"></div>
<div style="left:27px;top:583px;width:979px;height:1px;background:#d4d4d4;"></div>
<div style="left:27px;top:603px;width:979px;height:1px;background:#d4d4d4;"></div>
<div style="left:27px;top:623px;width:979px;height:1px;background:#d4d4d4;"></div>
<div style="left:27px;top:643px;width:979px;height:1px;background:#d4d4d4;"></div>
<div style="left:27px;top:663px;width:979px;height:1px;background:#d4d4d4;"></div>
<div style="left:27px;top:224px;width:110px;height:59px;background:#ffc106;"></div>
<div style="left:27px;top:284px;width:110px;height:300px;background:#ffd966;"></div>
<div style="left:138px;top:244px;width:605px;height:39px;background:#9ad08a;"></div>
<div style="left:139px;top:225px;width:152px;height:17px;background:#6ccd43;"></div>
<div style="left:291px;top:225px;width:450px;height:17px;background:#52a22f;"></div>
<div style="left:137px;top:244px;width:1px;height:340px;background:#000;"></div>
<div style="left:290px;top:244px;width:1px;height:340px;background:#000;"></div>
<div style="left:443px;top:244px;width:1px;height:340px;background:#000;"></div>
<div style="left:592px;top:244px;width:1px;height:340px;background:#000;"></div>
<div style="left:742px;top:244px;width:1px;height:340px;background:#000;"></div>
<div style="left:27px;top:283px;width:716px;height:1px;background:#000;"></div>
<div style="left:27px;top:303px;width:716px;height:1px;background:#000;"></div>
<div style="left:27px;top:323px;width:716px;height:1px;background:#000;"></div>
<div style="left:27px;top:343px;width:716px;height:1px;background:#000;"></div>
<div style="left:27px;top:363px;width:716px;height:1px;background:#000;"></div>
<div style="left:27px;top:383px;width:716px;height:1px;background:#000;"></div>
<div style="left:27px;top:403px;width:716px;height:1px;background:#000;"></div>
<div style="left:27px;top:423px;width:716px;height:1px;background:#000;"></div>
<div style="left:27px;top:443px;width:716px;height:1px;background:#000;"></div>
<div style="left:27px;top:463px;width:716px;height:1px;background:#000;"></div>
<div style="left:27px;top:483px;width:716px;height:1px;background:#000;"></div>
<div style="left:27px;top:503px;width:716px;height:1px;background:#000;"></div>
<div style="left:27px;top:523px;width:716px;height:1px;background:#000;"></div>
<div style="left:27px;top:543px;width:716px;height:1px;background:#000;"></div>
<div style="left:27px;top:563px;width:716px;height:1px;background:#000;"></div>
<div style="left:27px;top:583px;width:716px;height:1px;background:#000;"></div>
<span style="font-size:13.2px;line-height:20px;top:234px;color:#000;letter-spacing:0.250px;left:29.50px;-webkit-text-stroke:0.15px #000;">Торговая точка/</span>
<span style="font-size:13.2px;line-height:20px;top:254px;color:#000;letter-spacing:-0.067px;left:29.50px;-webkit-text-stroke:0.15px #000;">Дата</span>
<span style="font-size:13.2px;line-height:20px;top:245px;color:#000;letter-spacing:0.444px;left:139.70px;-webkit-text-stroke:0.15px #000;">Продажи по Торговой</span>
<span style="font-size:13.2px;line-height:20px;top:265px;color:#000;letter-spacing:0.147px;left:140.70px;-webkit-text-stroke:0.15px #000;">точке 1, тыс. руб.</span>
<span style="font-size:13.2px;line-height:20px;top:245px;color:#000;letter-spacing:0.444px;left:292.70px;-webkit-text-stroke:0.15px #000;">Продажи по Торговой</span>
<span style="font-size:13.2px;line-height:20px;top:265px;color:#000;letter-spacing:0.147px;left:293.70px;-webkit-text-stroke:0.15px #000;">точке 2, тыс. руб.</span>
<span style="font-size:13.2px;line-height:20px;top:245px;color:#000;letter-spacing:0.444px;left:445.70px;-webkit-text-stroke:0.15px #000;">Продажи по Торговой</span>
<span style="font-size:13.2px;line-height:20px;top:265px;color:#000;letter-spacing:0.147px;left:446.70px;-webkit-text-stroke:0.15px #000;">точке 3, тыс. руб.</span>
<span style="font-size:13.2px;line-height:20px;top:245px;color:#000;letter-spacing:0.444px;left:594.70px;-webkit-text-stroke:0.15px #000;">Продажи по Торговой</span>
<span style="font-size:13.2px;line-height:20px;top:265px;color:#000;letter-spacing:0.147px;left:595.70px;-webkit-text-stroke:0.15px #000;">точке 4, тыс. руб.</span>
<div style="left:139px;top:224px;width:300px;height:19px;overflow:hidden"><span style="font-size:13.2px;line-height:20px;top:1px;color:#000;letter-spacing:0.400px;left:-20.40px;-webkit-text-stroke:0.15px #000;">Продажи по торговым точкам</span></div>
<span style="font-size:13.2px;line-height:20px;top:285px;color:#000;letter-spacing:-0.378px;left:71.90px;-webkit-text-stroke:0.15px #000;">01.06.2019</span>
<span style="font-size:13.2px;line-height:20px;top:285px;color:#000;letter-spacing:-0.400px;left:140.30px;-webkit-text-stroke:0.15px #000;">25.223</span>
<span style="font-size:13.2px;line-height:20px;top:285px;color:#000;letter-spacing:-0.200px;left:292.30px;-webkit-text-stroke:0.15px #000;">33.224</span>
<span style="font-size:13.2px;line-height:20px;top:285px;color:#000;letter-spacing:-0.200px;left:445.30px;-webkit-text-stroke:0.15px #000;">14.557</span>
<span style="font-size:13.2px;line-height:20px;top:285px;color:#000;letter-spacing:-0.400px;left:595.30px;-webkit-text-stroke:0.15px #000;">24.334</span>
<span style="font-size:13.2px;line-height:20px;top:305px;color:#000;letter-spacing:-0.378px;left:71.90px;-webkit-text-stroke:0.15px #000;">02.06.2019</span>
<span style="font-size:13.2px;line-height:20px;top:305px;color:#000;letter-spacing:-0.400px;left:140.30px;-webkit-text-stroke:0.15px #000;">25.475</span>
<span style="font-size:13.2px;line-height:20px;top:305px;color:#000;letter-spacing:-0.200px;left:292.30px;-webkit-text-stroke:0.15px #000;">33.722</span>
<span style="font-size:13.2px;line-height:20px;top:305px;color:#000;letter-spacing:-0.200px;left:445.30px;-webkit-text-stroke:0.15px #000;">14.673</span>
<span style="font-size:13.2px;line-height:20px;top:305px;color:#000;letter-spacing:-0.400px;left:595.30px;-webkit-text-stroke:0.15px #000;">24.456</span>
<span style="font-size:13.2px;line-height:20px;top:325px;color:#000;letter-spacing:-0.378px;left:71.90px;-webkit-text-stroke:0.15px #000;">03.06.2019</span>
<span style="font-size:13.2px;line-height:20px;top:325px;color:#000;letter-spacing:-0.525px;left:140.30px;-webkit-text-stroke:0.15px #000;">25.73</span>
<span style="font-size:13.2px;line-height:20px;top:325px;color:#000;letter-spacing:-0.200px;left:292.30px;-webkit-text-stroke:0.15px #000;">34.228</span>
<span style="font-size:13.2px;line-height:20px;top:325px;color:#000;letter-spacing:-0.200px;left:445.30px;-webkit-text-stroke:0.15px #000;">14.791</span>
<span style="font-size:13.2px;line-height:20px;top:325px;color:#000;letter-spacing:-0.400px;left:595.30px;-webkit-text-stroke:0.15px #000;">24.578</span>
<span style="font-size:13.2px;line-height:20px;top:345px;color:#000;letter-spacing:-0.378px;left:71.90px;-webkit-text-stroke:0.15px #000;">04.06.2019</span>
<span style="font-size:13.2px;line-height:20px;top:345px;color:#000;letter-spacing:-0.400px;left:140.30px;-webkit-text-stroke:0.15px #000;">25.987</span>
<span style="font-size:13.2px;line-height:20px;top:345px;color:#000;letter-spacing:-0.200px;left:292.30px;-webkit-text-stroke:0.15px #000;">34.742</span>
<span style="font-size:13.2px;line-height:20px;top:345px;color:#000;letter-spacing:-0.200px;left:445.30px;-webkit-text-stroke:0.15px #000;">14.909</span>
<span style="font-size:13.2px;line-height:20px;top:345px;color:#000;letter-spacing:-0.400px;left:595.30px;-webkit-text-stroke:0.15px #000;">24.701</span>
<span style="font-size:13.2px;line-height:20px;top:365px;color:#000;letter-spacing:-0.378px;left:71.90px;-webkit-text-stroke:0.15px #000;">05.06.2019</span>
<span style="font-size:13.2px;line-height:20px;top:365px;color:#000;letter-spacing:-0.400px;left:140.30px;-webkit-text-stroke:0.15px #000;">26.247</span>
<span style="font-size:13.2px;line-height:20px;top:365px;color:#000;letter-spacing:-0.200px;left:292.30px;-webkit-text-stroke:0.15px #000;">35.263</span>
<span style="font-size:13.2px;line-height:20px;top:365px;color:#000;letter-spacing:-0.200px;left:445.30px;-webkit-text-stroke:0.15px #000;">15.028</span>
<span style="font-size:13.2px;line-height:20px;top:365px;color:#000;letter-spacing:-0.400px;left:595.30px;-webkit-text-stroke:0.15px #000;">24.824</span>
<span style="font-size:13.2px;line-height:20px;top:385px;color:#000;letter-spacing:-0.378px;left:71.90px;-webkit-text-stroke:0.15px #000;">06.06.2019</span>
<span style="font-size:13.2px;line-height:20px;top:385px;color:#000;letter-spacing:-0.525px;left:140.30px;-webkit-text-stroke:0.15px #000;">26.51</span>
<span style="font-size:13.2px;line-height:20px;top:385px;color:#000;letter-spacing:-0.200px;left:292.30px;-webkit-text-stroke:0.15px #000;">35.792</span>
<span style="font-size:13.2px;line-height:20px;top:385px;color:#000;letter-spacing:-0.200px;left:445.30px;-webkit-text-stroke:0.15px #000;">15.149</span>
<span style="font-size:13.2px;line-height:20px;top:385px;color:#000;letter-spacing:-0.400px;left:595.30px;-webkit-text-stroke:0.15px #000;">24.948</span>
<span style="font-size:13.2px;line-height:20px;top:405px;color:#000;letter-spacing:-0.378px;left:71.90px;-webkit-text-stroke:0.15px #000;">07.06.2019</span>
<span style="font-size:13.2px;line-height:20px;top:405px;color:#000;letter-spacing:-0.400px;left:140.30px;-webkit-text-stroke:0.15px #000;">26.775</span>
<span style="font-size:13.2px;line-height:20px;top:405px;color:#000;letter-spacing:-0.200px;left:292.30px;-webkit-text-stroke:0.15px #000;">36.329</span>
<span style="font-size:13.2px;line-height:20px;top:405px;color:#000;letter-spacing:-0.275px;left:445.30px;-webkit-text-stroke:0.15px #000;">15.27</span>
<span style="font-size:13.2px;line-height:20px;top:405px;color:#000;letter-spacing:-0.400px;left:595.30px;-webkit-text-stroke:0.15px #000;">25.073</span>
<span style="font-size:13.2px;line-height:20px;top:425px;color:#000;letter-spacing:-0.378px;left:71.90px;-webkit-text-stroke:0.15px #000;">08.06.2019</span>
<span style="font-size:13.2px;line-height:20px;top:425px;color:#000;letter-spacing:-0.400px;left:140.30px;-webkit-text-stroke:0.15px #000;">27.042</span>
<span style="font-size:13.2px;line-height:20px;top:425px;color:#000;letter-spacing:-0.200px;left:292.30px;-webkit-text-stroke:0.15px #000;">36.873</span>
<span style="font-size:13.2px;line-height:20px;top:425px;color:#000;letter-spacing:-0.200px;left:445.30px;-webkit-text-stroke:0.15px #000;">15.392</span>
<span style="font-size:13.2px;line-height:20px;top:425px;color:#000;letter-spacing:-0.400px;left:595.30px;-webkit-text-stroke:0.15px #000;">25.199</span>
<span style="font-size:13.2px;line-height:20px;top:445px;color:#000;letter-spacing:-0.378px;left:71.90px;-webkit-text-stroke:0.15px #000;">09.06.2019</span>
<span style="font-size:13.2px;line-height:20px;top:445px;color:#000;letter-spacing:-0.400px;left:140.30px;-webkit-text-stroke:0.15px #000;">27.313</span>
<span style="font-size:13.2px;line-height:20px;top:445px;color:#000;letter-spacing:-0.200px;left:292.30px;-webkit-text-stroke:0.15px #000;">37.427</span>
<span style="font-size:13.2px;line-height:20px;top:445px;color:#000;letter-spacing:-0.200px;left:445.30px;-webkit-text-stroke:0.15px #000;">15.515</span>
<span style="font-size:13.2px;line-height:20px;top:445px;color:#000;letter-spacing:-0.400px;left:595.30px;-webkit-text-stroke:0.15px #000;">25.325</span>
<span style="font-size:13.2px;line-height:20px;top:465px;color:#000;letter-spacing:-0.267px;left:70.90px;-webkit-text-stroke:0.15px #000;">10.06.2019</span>
<span style="font-size:13.2px;line-height:20px;top:465px;color:#000;letter-spacing:-0.400px;left:140.30px;-webkit-text-stroke:0.15px #000;">27.586</span>
<span style="font-size:13.2px;line-height:20px;top:465px;color:#000;letter-spacing:-0.200px;left:292.30px;-webkit-text-stroke:0.15px #000;">37.988</span>
<span style="font-size:13.2px;line-height:20px;top:465px;color:#000;letter-spacing:-0.200px;left:445.30px;-webkit-text-stroke:0.15px #000;">15.639</span>
<span style="font-size:13.2px;line-height:20px;top:465px;color:#000;letter-spacing:-0.400px;left:595.30px;-webkit-text-stroke:0.15px #000;">25.451</span>
<span style="font-size:13.2px;line-height:20px;top:485px;color:#000;letter-spacing:-0.156px;left:70.90px;-webkit-text-stroke:0.15px #000;">11.06.2019</span>
<span style="font-size:13.2px;line-height:20px;top:485px;color:#000;letter-spacing:-0.400px;left:140.30px;-webkit-text-stroke:0.15px #000;">27.862</span>
<span style="font-size:13.2px;line-height:20px;top:485px;color:#000;letter-spacing:-0.200px;left:292.30px;-webkit-text-stroke:0.15px #000;">38.558</span>
<span style="font-size:13.2px;line-height:20px;top:485px;color:#000;letter-spacing:-0.200px;left:445.30px;-webkit-text-stroke:0.15px #000;">15.764</span>
<span style="font-size:13.2px;line-height:20px;top:485px;color:#000;letter-spacing:-0.400px;left:595.30px;-webkit-text-stroke:0.15px #000;">25.578</span>
<span style="font-size:13.2px;line-height:20px;top:505px;color:#000;letter-spacing:-0.267px;left:70.90px;-webkit-text-stroke:0.15px #000;">12.06.2019</span>
<span style="font-size:13.2px;line-height:20px;top:505px;color:#000;letter-spacing:-0.400px;left:140.30px;-webkit-text-stroke:0.15px #000;">28.141</span>
<span style="font-size:13.2px;line-height:20px;top:505px;color:#000;letter-spacing:-0.200px;left:292.30px;-webkit-text-stroke:0.15px #000;">39.136</span>
<span style="font-size:13.2px;line-height:20px;top:505px;color:#000;letter-spacing:-0.200px;left:445.30px;-webkit-text-stroke:0.15px #000;">15.891</span>
<span style="font-size:13.2px;line-height:20px;top:505px;color:#000;letter-spacing:-0.400px;left:595.30px;-webkit-text-stroke:0.15px #000;">25.706</span>
<span style="font-size:13.2px;line-height:20px;top:525px;color:#000;letter-spacing:-0.267px;left:70.90px;-webkit-text-stroke:0.15px #000;">13.06.2019</span>
<span style="font-size:13.2px;line-height:20px;top:525px;color:#000;letter-spacing:-0.400px;left:140.30px;-webkit-text-stroke:0.15px #000;">28.422</span>
<span style="font-size:13.2px;line-height:20px;top:525px;color:#000;letter-spacing:-0.200px;left:292.30px;-webkit-text-stroke:0.15px #000;">39.723</span>
<span style="font-size:13.2px;line-height:20px;top:525px;color:#000;letter-spacing:-0.200px;left:445.30px;-webkit-text-stroke:0.15px #000;">16.018</span>
<span style="font-size:13.2px;line-height:20px;top:525px;color:#000;letter-spacing:-0.400px;left:595.30px;-webkit-text-stroke:0.15px #000;">25.835</span>
<span style="font-size:13.2px;line-height:20px;top:545px;color:#000;letter-spacing:-0.267px;left:70.90px;-webkit-text-stroke:0.15px #000;">14.06.2019</span>
<span style="font-size:13.2px;line-height:20px;top:545px;color:#000;letter-spacing:-0.400px;left:140.30px;-webkit-text-stroke:0.15px #000;">28.706</span>
<span style="font-size:13.2px;line-height:20px;top:545px;color:#000;letter-spacing:-0.400px;left:293.30px;-webkit-text-stroke:0.15px #000;">40.319</span>
<span style="font-size:13.2px;line-height:20px;top:545px;color:#000;letter-spacing:-0.200px;left:445.30px;-webkit-text-stroke:0.15px #000;">16.146</span>
<span style="font-size:13.2px;line-height:20px;top:545px;color:#000;letter-spacing:-0.400px;left:595.30px;-webkit-text-stroke:0.15px #000;">25.964</span>
<span style="font-size:13.2px;line-height:20px;top:565px;color:#000;letter-spacing:-0.267px;left:70.90px;-webkit-text-stroke:0.15px #000;">15.06.2019</span>
<span style="font-size:13.2px;line-height:20px;top:565px;color:#000;letter-spacing:-0.400px;left:140.30px;-webkit-text-stroke:0.15px #000;">28.993</span>
<span style="font-size:13.2px;line-height:20px;top:565px;color:#000;letter-spacing:-0.400px;left:293.30px;-webkit-text-stroke:0.15px #000;">40.924</span>
<span style="font-size:13.2px;line-height:20px;top:565px;color:#000;letter-spacing:-0.200px;left:445.30px;-webkit-text-stroke:0.15px #000;">16.275</span>
<span style="font-size:13.2px;line-height:20px;top:565px;color:#000;letter-spacing:-0.400px;left:595.30px;-webkit-text-stroke:0.15px #000;">26.094</span>
<div style="left:136px;top:222px;width:608px;height:23px;border:2px solid #017641;box-sizing:border-box;"></div>
<div style="left:138px;top:224px;width:604px;height:19px;border:1px solid #fff;box-sizing:border-box;"></div>
<div style="left:739px;top:240px;width:7px;height:7px;background:#fff;"></div>
<div style="left:740px;top:241px;width:5px;height:5px;background:#017641;"></div>
<svg style="left:130px;top:215px" width="624" height="38"><rect x="3.9" y="3.5" width="614.6" height="29.6" rx="6.5" fill="none" stroke="#ff0000" stroke-width="3.1"/></svg>
<div style="left:1006px;top:204px;width:22px;height:464px;background:#e6e6e6;"></div>
<div style="left:1006px;top:224px;width:1px;height:444px;background:#9b9b9b;"></div>
<div style="left:1010px;top:206px;width:15px;height:15px;background:#fff;border:1px solid #c6c6c6;box-sizing:border-box;"></div>
<svg style="left:1014px;top:211px;" width="8" height="5" viewBox="0 0 8 5"><path d="M0 4.6l3.6-4.2 3.6 4.2z" fill="#606060"/></svg>
<div style="left:1010px;top:222px;width:15px;height:410px;background:#fff;border:1px solid #c6c6c6;box-sizing:border-box;"></div>
<svg style="left:1010px;top:632px" width="15" height="20"><defs><pattern id="dq" width="4" height="4" patternUnits="userSpaceOnUse"><rect x="1" y="1" width="1" height="1" fill="#f2f2f2"/><rect x="3" y="3" width="1" height="1" fill="#f2f2f2"/></pattern></defs><rect width="15" height="20" fill="#d9d9d9"/><rect width="15" height="20" fill="url(#dq)"/></svg>
<div style="left:1010px;top:653px;width:15px;height:15px;background:#fff;border:1px solid #c6c6c6;box-sizing:border-box;"></div>
<svg style="left:1014px;top:659px;" width="8" height="5" viewBox="0 0 8 5"><path d="M0 0.2l3.6 4.2 3.6-4.2z" fill="#606060"/></svg>
<div style="left:1px;top:667px;width:1027px;height:28px;background:#e6e6e6;"></div>
<div style="left:1px;top:667px;width:1006px;height:1px;background:#9b9b9b;"></div>
<div style="left:101px;top:667px;width:107px;height:24px;background:#fff;"></div>
<div style="left:101px;top:667px;width:1px;height:23px;background:#ababab;"></div>
<div style="left:207px;top:667px;width:1px;height:23px;background:#ababab;"></div>
<div style="left:101px;top:690px;width:107px;height:2px;background:#017641;"></div>
<span style="font-size:12.5px;line-height:20px;top:671px;color:#017641;font-weight:700;letter-spacing:0.167px;left:112.50px;">microexcel.ru</span>
<svg style="left:28px;top:676px;" width="5" height="8" viewBox="0 0 5 8"><path d="M4.5 0v8l-4.5-4z" fill="#c0c0c0"/></svg>
<svg style="left:57px;top:676px;" width="5" height="8" viewBox="0 0 5 8"><path d="M0 0v8l4.5-4z" fill="#c0c0c0"/></svg>
<svg style="left:241px;top:672px;" width="17" height="17" viewBox="0 0 17 17"><circle cx="8.5" cy="8.5" r="7.5" fill="none" stroke="#6a6a6a" stroke-width="1.1"/><path d="M8.5 4.5v8 M4.5 8.5h8" stroke="#6a6a6a" stroke-width="1.5"/></svg>
<div style="left:617px;top:676px;width:2px;height:2px;background:#b0b0b0;"></div>
<div style="left:617px;top:680px;width:2px;height:2px;background:#b0b0b0;"></div>
<div style="left:617px;top:684px;width:2px;height:2px;background:#b0b0b0;"></div>
<div style="left:634px;top:674px;width:15px;height:15px;background:#fff;border:1px solid #c6c6c6;box-sizing:border-box;"></div>
<svg style="left:638.5px;top:677.5px;" width="5" height="8" viewBox="0 0 5 8"><path d="M4.6 0.3v7l-4.4-3.5z" fill="#606060"/></svg>
<div style="left:649px;top:674px;width:304px;height:15px;background:#fff;border:1px solid #c6c6c6;box-sizing:border-box;"></div>
<svg style="left:953px;top:674px" width="38" height="15"><rect width="38" height="15" fill="#d9d9d9"/><rect width="38" height="15" fill="url(#dq)"/></svg>
<div style="left:992px;top:674px;width:15px;height:15px;background:#fff;border:1px solid #c6c6c6;box-sizing:border-box;"></div>
<svg style="left:997.6px;top:677.5px;" width="5" height="8" viewBox="0 0 5 8"><path d="M0.2 0.3v7l4.4-3.5z" fill="#606060"/></svg>
<div style="left:1px;top:696px;width:1027px;height:21px;background:#f3f3f3;"></div>
<div style="left:1px;top:695px;width:1027px;height:1px;background:#d0d0d0;"></div>
<svg style="left:9px;top:699px;" width="14" height="14" viewBox="0 0 14 14"><circle cx="3" cy="3" r="2.6" fill="#555"/><path d="M6.5 1.5h6v11h-11v-6" fill="none" stroke="#555" stroke-width="1"/><path d="M3.5 8h8 M3.5 10.5h8 M5.5 6.5v6 M8.5 4v8.5 M6.5 5h6" stroke="#555" stroke-width="1" fill="none"/></svg>
<div style="left:728px;top:696px;width:38px;height:21px;background:#c6c6c6;"></div>
<svg style="left:740px;top:699px;" width="14" height="14" viewBox="0 0 14 14"><path d="M0.5 0.5h12v12h-12z M0.5 4.5h12 M0.5 8.5h12 M4.5 0.5v12 M8.5 0.5v12" fill="none" stroke="#6a6a6a" stroke-width="1"/></svg>
<svg style="left:778px;top:699px;" width="15" height="14" viewBox="0 0 15 14"><path d="M0.5 0.5h13v12h-13z M3.5 2.5h7v8h-7z M5 4.5h4 M5 6.5h4 M5 8.5h4" fill="none" stroke="#6a6a6a" stroke-width="1"/></svg>
<svg style="left:816px;top:699px;" width="15" height="14" viewBox="0 0 15 14"><path d="M0.5 0.5h13v12h-13z M3.5 0.5v6.5h6v-6.5 M6.5 0.5v6.5" fill="none" stroke="#6a6a6a" stroke-width="1"/></svg>
<div style="left:847px;top:705px;width:6px;height:2px;background:#6a6a6a;"></div>
<div style="left:857px;top:706px;width:100px;height:1px;background:#a0a0a0;"></div>
<div style="left:905px;top:700px;width:4px;height:11px;background:#6a6a6a;"></div>
<div style="left:961px;top:705px;width:7px;height:2px;background:#6a6a6a;"></div>
<div style="left:963.5px;top:702.5px;width:2px;height:7px;background:#6a6a6a;"></div>
<span style="font-size:11.5px;line-height:20px;top:695px;color:#262626;letter-spacing:-0.750px;left:979.00px;">100 %</span>
<div style="left:0px;top:0px;width:1.35px;height:718px;background:#017641;"></div>
<div style="left:1028px;top:0px;width:1px;height:718px;background:#017641;"></div>
<div style="left:0px;top:716.5px;width:1029px;height:1.5px;background:#017641;"></div>
</div></body></html>
